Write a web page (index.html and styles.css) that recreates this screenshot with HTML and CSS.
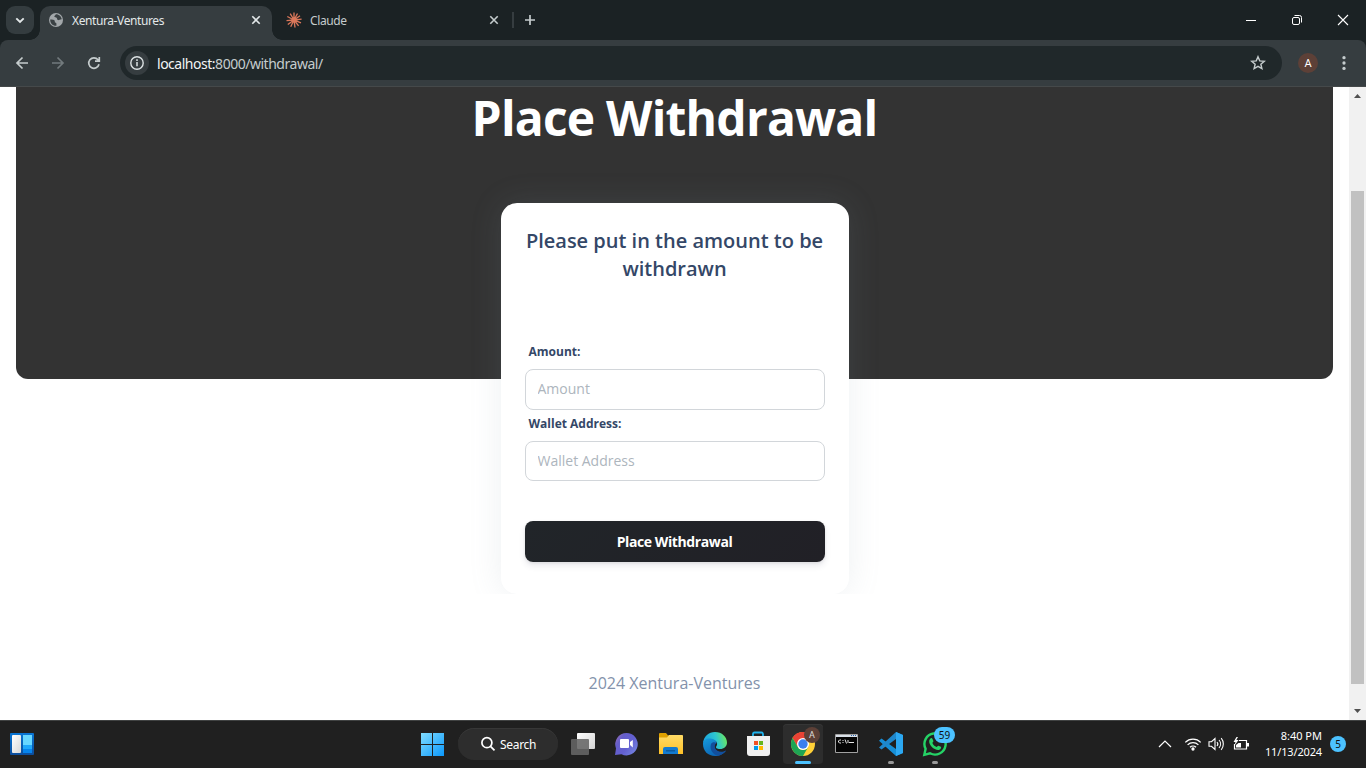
FILE: index.html
```html
<!DOCTYPE html>
<html lang="en">
<head>
<meta charset="utf-8">
<title>Xentura-Ventures</title>
<link rel="stylesheet" href="styles.css">
</head>
<body>
<div class="screen">
  <div class="tabstrip">
    <button class="tab-search" aria-label="Search tabs"><svg width="28" height="28" viewBox="0 0 28 28"><path d="M10.3 12.3 14 16l3.7-3.7" fill="none" stroke="#e3e8e9" stroke-width="1.9"/></svg></button>
    <div class="tab tab-active">
      <svg class="favicon" width="16" height="16" viewBox="0 0 16 16"><circle cx="8" cy="8" r="7" fill="#a2a7aa"/><path d="M2.200 7.500c2 .1 4 .2 4.500 1.200.4 1-.3 1.300.5 1.800.9.4 1.300.6 1.200 1.600v1.700C4.500 14 2.100 11 2.200 7.500zM7.800 2.200c-.2 1.200-1.600 1.200-1.500 2.300.2 1.100 1.900.6 2.500 1.500.6 1 .1 1.800 1.200 2.100 1.200.3 1.500-.8 3.700-.8C13.500 4.500 11 2.100 7.800 2.200z" fill="#3a4144"/></svg>
      <span class="tab-title t-xen">Xentura-Ventures</span>
      <svg class="close" width="10" height="10" viewBox="0 0 10 10"><path d="m1.300 1.300 7.400 7.400m0-7.400L1.300 8.700" stroke="#e3e8e9" stroke-width="1.600"/></svg>
    </div>
    <div class="tab tab-claude">
      <svg class="favicon" width="16" height="16" viewBox="0 0 16 16"><path d="M8 8V.5M8 8l3.500-6.500M8 8l6-4.200M8 8l7.600-.8M8 8l7 2.800M8 8l4.600 5.900M8 8l1 7.500M8 8l-3.300 6.700M8 8l-6.200 4.500M8 8l-7.500.6M8 8 1.300 4.500M8 8 4.200 1.600" stroke="#d9775a" stroke-width="1.350"/><circle cx="8" cy="8" r="2.400" fill="#d9775a"/></svg>
      <span class="tab-title t-cl">Claude</span>
      <svg class="close" width="10" height="10" viewBox="0 0 10 10"><path d="m1.300 1.300 7.400 7.400m0-7.400L1.300 8.700" stroke="#c5cccd" stroke-width="1.600"/></svg>
    </div>
    <i class="tab-sep"></i>
    <svg class="newtab" width="12" height="12" viewBox="0 0 12 12"><path d="M6 1v10M1 6h10" stroke="#c5cccd" stroke-width="1.700"/></svg>
    <div class="window-controls">
      <svg width="46" height="40" viewBox="0 0 46 40"><path d="M18 20.500h10" stroke="#fff"/></svg>
      <svg width="46" height="40" viewBox="0 0 46 40" fill="none" stroke="#fff"><rect x="18.500" y="17.500" width="7" height="7" rx="1.500"/><path d="M20.500 15.500h5a2 2 0 0 1 2 2v5"/></svg>
      <svg width="46" height="40" viewBox="0 0 46 40"><path d="m18 15 10 10m0-10L18 25" stroke="#fff" stroke-width="1.100"/></svg>
    </div>
  </div>

  <div class="toolbar-back">
  <div class="toolbar">
    <svg class="nav" width="36" height="46" viewBox="0 0 36 46" fill="none" stroke="#c5cccd" stroke-width="1.700"><path d="M24 23H13m5.500-5.500L13 23l5.500 5.500"/></svg>
    <svg class="nav" width="36" height="46" viewBox="0 0 36 46" fill="none" stroke="#727a7d" stroke-width="1.700"><path d="M12 23h11m-5.500-5.500L23 23l-5.500 5.500"/></svg>
    <svg class="nav" width="36" height="46" viewBox="0 0 36 46" fill="none" stroke="#c5cccd" stroke-width="1.700"><path d="M23 24.300A5.200 5.200 0 1 1 22 19.800l1 1M23.300 17v4.200H19"/></svg>
    <div class="omnibox">
      <span class="info"><svg width="24" height="24" viewBox="0 0 24 24"><circle cx="12" cy="12" r="6.200" fill="none" stroke="#dce2e3" stroke-width="1.400"/><path d="M12 11v4.300M12 8.300v1.600" stroke="#dce2e3" stroke-width="1.500"/></svg></span>
      <span class="url"><b>localhost:</b>8000/withdrawal/</span>
      <svg class="star" width="16" height="16" viewBox="0 0 16 16"><path d="m8 1.700 1.750 4.150 4.550.4-3.450 3 1.050 4.400L8 11.300l-3.900 2.350 1.050-4.400-3.450-3 4.550-.4z" fill="none" stroke="#c5cccd" stroke-width="1.400"/></svg>
    </div>
    <span class="avatar">A</span>
    <svg class="menu" width="4" height="16" viewBox="0 0 4 16" fill="#c5cccd"><circle cx="2" cy="2.700" r="1.650"/><circle cx="2" cy="8" r="1.650"/><circle cx="2" cy="13.400" r="1.650"/></svg>
  </div>
  </div>

  <div class="viewport">
    <main class="page">
      <header class="banner"><h1>Place Withdrawal</h1></header>
      <section class="card-clip">
        <form class="card">
          <h5>Please put in the amount to be withdrawn</h5>
          <label for="amount">Amount:</label>
          <input class="amount" id="amount" type="text" placeholder="Amount">
          <label for="wallet">Wallet Address:</label>
          <input class="wallet" id="wallet" type="text" placeholder="Wallet Address">
          <button class="submit" type="button">Place Withdrawal</button>
        </form>
      </section>
      <footer><span>2024 Xentura-Ventures</span></footer>
    </main>
    <div class="scrollbar">
      <svg width="17" height="17" viewBox="0 0 17 17"><path d="M5 11h7L8.500 7z" fill="#505050"/></svg>
      <i class="thumb"></i>
      <svg class="down" width="17" height="17" viewBox="0 0 17 17"><path d="M5 6h7l-3.500 4z" fill="#505050"/></svg>
    </div>
  </div>

  <div class="taskbar">
    <svg class="widgets" width="24" height="22" viewBox="0 0 24 22"><defs><linearGradient id="wg" x2="0" y2="1"><stop stop-color="#0875d4"/><stop offset="1" stop-color="#0c4d9c"/></linearGradient><linearGradient id="ww" x2="1" y2="1"><stop stop-color="#fff"/><stop offset="1" stop-color="#d8d8d8"/></linearGradient></defs><rect width="24" height="22" rx="1" fill="url(#wg)"/><rect x="2" y="2" width="9" height="18" rx="1" fill="url(#ww)"/><path d="M13 2h9v10h-9z" fill="#68d7ff"/><path d="M13 12h9v4h-9z" fill="#1fa8fb"/><path d="M13 16h9v4h-9z" fill="#0684ed"/></svg>
    <div class="apps">
      <span class="app"><svg width="24" height="24" viewBox="0 0 24 24"><defs><linearGradient id="win" gradientUnits="userSpaceOnUse" x1="1" y1="1" x2="24" y2="24"><stop stop-color="#80dcff"/><stop offset="1" stop-color="#0b98fb"/></linearGradient></defs><path d="M1 1h11v11H1zM13 1h11v11H13zM1 13h11v11H1zM13 13h11v11H13z" fill="url(#win)"/></svg></span>
      <span class="search"><svg width="16" height="16" viewBox="0 0 16 16" fill="none" stroke="#fff" stroke-width="1.700"><circle cx="6.900" cy="6.700" r="5"/><path d="m10.500 10.300 4 4"/></svg><span>Search</span></span>
      <span class="app"><svg width="26" height="26" viewBox="0 0 26 26"><defs><linearGradient id="tv" x2="1" y2="1"><stop stop-color="#fff"/><stop offset="1" stop-color="#d3d3d3"/></linearGradient></defs><rect x="7" y="2" width="18" height="16" rx="1" fill="url(#tv)"/><rect x="1" y="8" width="18" height="16" rx="1" fill="#656565" fill-opacity=".88"/></svg></span>
      <span class="app"><svg class="nudge" width="24" height="24" viewBox="0 0 24 24"><defs><linearGradient id="chat" x2="1" y2=".7"><stop stop-color="#a773ac"/><stop offset=".3" stop-color="#655eca"/><stop offset=".65" stop-color="#6360d0"/><stop offset="1" stop-color="#7280df"/></linearGradient></defs><path d="M12.500 1a11.200 11.200 0 1 1-5 21.200L1 23l1-6.500A11.300 11.300 0 0 1 12.500 1z" fill="url(#chat)"/><rect x="6" y="7" width="9" height="9" rx="1" fill="#fff"/><path d="m16 10 2.800-2v7.500L16 13z" fill="#fff"/></svg></span>
      <span class="app"><svg width="26" height="24" viewBox="0 0 26 24"><defs><linearGradient id="fo" x2="0" y2="1"><stop stop-color="#ffdb67"/><stop offset="1" stop-color="#ffc127"/></linearGradient></defs><path d="M1 2q0-1 1-1h6l2 2.500h14q1 0 1 1V9H1z" fill="#e0a100"/><path d="M1 5.500h8L11 3h13q1 0 1 1v18H1z" fill="url(#fo)"/><path d="M5 22v-5q0-2 2-2h11q2 0 2 2v5z" fill="#137bd0"/><path d="M8 18h9v1.500H8z" fill="#0c5b9f"/></svg></span>
      <span class="app"><svg width="26" height="26" viewBox="0 0 26 26"><defs><linearGradient id="e1" x1="0" y1=".5" x2="1" y2=".3"><stop stop-color="#1aa2df"/><stop offset=".55" stop-color="#2dc6d1"/><stop offset="1" stop-color="#6ee95a"/></linearGradient><linearGradient id="e2" x2=".6" y2="1"><stop stop-color="#169bdd"/><stop offset="1" stop-color="#0b62b3"/></linearGradient></defs><path d="M1 12C2 5 6.500 1 13 1c7 0 12 5 12 10.500 0 4-3 6.500-7 6.500-3 0-5-1.200-3.500-3 1.500-2 .5-5-3-6C7.500 7.900 3 9 1 12z" fill="url(#e1)"/><path d="M1 13c0-4 3.500-6 7.500-5.500 3.500.3 6 2.300 6 4.500-3 .5-3.500 7 2.500 9 2.500.8 5 .3 7-1.500C22 23 17.500 25 13 25 6 25 1 20 1 13z" fill="url(#e2)"/><path d="M9 13c-2 6 3 12 8 11.400 3-.7 5.500-2.700 7-5-4 2.500-9.500 1.600-11-2.400-.8-2 0-4 1.500-5-2-1.500-4.500-1-5.500 1z" fill="#124f9d"/></svg></span>
      <span class="app"><svg class="nudge" width="24" height="26" viewBox="0 0 24 26"><path d="M7 6V3q0-1.500 1.500-1.500h7Q17 1.500 17 3v3" fill="none" stroke="#1fb3ed" stroke-width="1.800"/><path d="M1 5h23v17q0 3-3 3H4q-3 0-3-3z" fill="#f0f0f0"/><path d="M8 10h4v4H8z" fill="#f25022"/><path d="M13 10h4v4h-4z" fill="#65b51f"/><path d="M8 15h4v4H8z" fill="#0099ea"/><path d="M13 15h4v4h-4z" fill="#ffb900"/></svg></span>
      <span class="app active"><svg width="26" height="26" viewBox="0 0 26 26"><circle cx="13" cy="13" r="12" fill="#ffd037"/><path d="M13 13 2.600 7A12 12 0 0 1 23.400 7z" fill="#e94235"/><path d="M13 7h10.400A12 12 0 0 0 2.600 7l5.200 9z" fill="#e94235"/><path d="M2.600 7A12 12 0 0 0 13 25l5.200-9A6 6 0 0 1 7.800 16z" fill="#1ea554"/><circle cx="13" cy="13" r="6" fill="#fff"/><circle cx="13" cy="13" r="4.700" fill="#397fee"/></svg><b class="profile">A</b><i class="run wide"></i></span>
      <span class="app"><svg class="nudge" width="24" height="20" viewBox="0 0 24 20"><path d="M1.500.500h22v18h-22z" fill="#050505" stroke="#a1a1a1"/><path d="M2 1h21v2H2z" fill="#d9e0e8"/><path d="M17 1.500h1m1 0h1m1 0h1" stroke="#2861a8"/><path d="M7 6H5.500l-1 1v1l1 1H7M9 6v1m0 1v1M11 5.500l1.500 4M14 6v3M15 8.500h5" fill="none" stroke="#e5e5e5"/></svg></span>
      <span class="app"><svg width="26" height="26" viewBox="0 0 26 26"><path d="m18 1 7 3v18l-7 3L1 9.700 3.500 7.500 18 18z" fill="#168ed6"/><path d="M18 1 1 16.500l2.500 2L18 8z" fill="#1f87cb"/><path d="m18 1 7 3v18l-7 3z" fill="#2ca8f2"/></svg><i class="run"></i></span>
      <span class="app"><svg width="26" height="26" viewBox="0 0 26 26"><path d="M3.600 17.800A10.600 10.600 0 1 1 8 22.300L2.300 23.800z" fill="none" stroke="#25d366" stroke-width="2.400"/><path d="M8.500 7.500c.7-.8 1.500-.6 1.900.2l1 2.300c.2.700-.9 1.500-1 1.900.7 1.900 2.300 3.200 4.200 4 .6.100 1.200-1.500 1.900-1.200l2.300 1.100c1 .7-.4 3.200-2.400 3.300-4.200.3-9.700-5.200-9.200-9 .1-1.100.7-2 1.300-2.600z" fill="#25d366"/></svg><b class="unread">59</b><i class="run"></i></span>
    </div>
    <div class="tray">
      <svg class="chev" width="14" height="10" viewBox="0 0 14 10"><path d="m1 8 6-6 6 6" fill="none" stroke="#fff" stroke-width="1.200"/></svg>
      <svg class="wifi" width="18" height="14" viewBox="0 0 18 14" fill="none" stroke="#fff" stroke-width="1.300"><path d="M1.300 5.400a10.800 10.800 0 0 1 15.400 0M3.600 7.900a7.600 7.600 0 0 1 10.800 0M6 10.300a4.300 4.300 0 0 1 6 0"/><circle cx="9" cy="12" r="1" fill="#fff"/></svg>
      <svg class="vol" width="17" height="14" viewBox="0 0 17 14" fill="none" stroke="#fff" stroke-width="1.100"><path d="M1 4.700h2.500L7 1.500v11L3.500 9.300H1zM9 5a3 3 0 0 1 0 4M11 3a6 6 0 0 1 0 8M13.200 1.200a9 9 0 0 1 0 11.600"/></svg>
      <svg class="bat" width="17" height="14" viewBox="0 0 17 14"><path d="M6 3.500h7.500V12h-12V7" fill="none" stroke="#fff" stroke-width="1.200"/><path d="M14 6h2v3.500h-2zM3 10.500V8l2.500-2H8v4.500z" fill="#fff"/><path d="M3.500 0 .5 5h2L1.500 8.500 5.500 3H3.300L5 0z" fill="#fff"/></svg>
      <span class="clock"><span class="time">8:40 PM</span><span class="date">11/13/2024</span></span>
      <b class="count">5</b>
    </div>
  </div>
</div>
</body>
</html>
```
FILE: styles.css
```css
* { box-sizing: border-box; }
body { margin: 0; font-family: "Open Sans", "Noto Sans", sans-serif; }
svg { display: block; flex: none; }
.screen { width: 1366px; height: 768px; display: flex; flex-direction: column; overflow: hidden; background: #fff; }

/* Tab strip */
.tabstrip { height: 40px; flex: none; display: flex; align-items: center; background: #1b2224; padding-left: 6px; font-family: "Noto Sans", sans-serif; }
.tab-search { width: 28px; height: 28px; padding: 0; border: 0; border-radius: 9px; background: #343c3f; flex: none; }
.tab { display: flex; align-items: center; }
.tab-active { position: relative; width: 232px; height: 34px; align-self: flex-end; margin-left: 6px; padding: 0 11px 6px 8px; border-radius: 10px 10px 0 0; background: #363d40; }
.tab-active::before, .tab-active::after { content: ""; position: absolute; bottom: 0; width: 10px; height: 10px; }
.tab-active::before { left: -10px; background: radial-gradient(circle at 0 0, transparent 9.500px, #363d40 10px); }
.tab-active::after { right: -10px; background: radial-gradient(circle at 100% 0, transparent 9.500px, #363d40 10px); }
.tab-title { font-size: 12px; line-height: 16px; margin-left: 8px; padding-top: 2px; white-space: nowrap; color: #e3e8e9; }
.t-xen { letter-spacing: -.4px; }
.t-cl { color: #c5cccd; letter-spacing: -.4px; }
.close { margin-left: auto; }
.tab-claude { width: 213px; margin-left: 14px; }
.tab-sep { width: 2px; height: 16px; margin-left: 13px; background: #363d40; }
.newtab { margin-left: 10px; }
.window-controls { margin-left: auto; display: flex; }

/* Toolbar */
.toolbar-back { height: 47px; flex: none; background: #1b2224; }
.toolbar { height: 47px; display: flex; align-items: center; padding: 0 20px 0 4px; background: #363d40; border-bottom: 1px solid #45494a; border-radius: 8px 8px 0 0; }
.omnibox { width: 1162px; height: 34px; margin-left: 8px; display: flex; align-items: center; padding: 0 16px 0 5px; border-radius: 17px; background: #20282a; }
.info { width: 24px; height: 24px; border-radius: 50%; background: #363d40; }
.url { margin-left: 8px; padding-top: 1px; color: #c5cccd; font: 14px/20px "Noto Sans", sans-serif; letter-spacing: -.48px; }
.url b { font-weight: 400; color: #f2f5f5; }
.star { margin-left: auto; }
.avatar { width: 20px; height: 20px; margin-left: 16px; border-radius: 50%; background: #5d4037; color: #fff; font: 11px/21px Roboto, sans-serif; text-align: center; }
.menu { margin-left: auto; }

/* Page */
.viewport { height: 633px; flex: none; display: flex; }
.page { flex: 1; min-width: 0; padding: 0 16px; color: #344767; }
.banner { height: 292px; padding-top: 1px; background: #333; border-radius: 0 0 12px 12px; text-align: center; }
.banner h1 { margin: 0; font-size: 48px; line-height: 60px; font-weight: 700; color: #fff; letter-spacing: -.8px; }
.card-clip { position: relative; width: 448px; height: 441px; margin: -226px auto 0; padding: 50px 50px 0; overflow: hidden; }
.card { width: 348px; height: 391px; padding: 24px; border-radius: 16px; background: #fff; box-shadow: 0 0 32px 0 rgba(136,152,170,.15); display: flex; flex-direction: column; }
.card h5 { margin: 0 0 60px; font-size: 20px; line-height: 28px; font-weight: 600; text-align: center; }
.card label { font-size: 12px; line-height: 18px; font-weight: 700; margin: 0 0 8px 4px; }
.card input { width: 300px; border: 1px solid #d2d6da; border-radius: 8px; padding: 0 12px 2px; background: #fff; font: 14px/20px "Open Sans", sans-serif; outline: 0; }
.card input::placeholder { color: #adb5bd; opacity: 1; }
.card .amount { height: 41px; margin-bottom: 5px; }
.card .wallet { height: 40px; margin-bottom: 40px; }
.submit { height: 41px; padding: 0; border: 0; border-radius: 8px; color: #fff; background: linear-gradient(310deg, #212026, #212529); font: 700 14px/21px "Open Sans", sans-serif; letter-spacing: -.4px; box-shadow: 0 4px 6px rgba(50,50,93,.1), 0 1px 3px rgba(0,0,0,.08); }
footer { margin-top: 77px; text-align: center; font-size: 16px; line-height: 24px; color: #8392ab; }

.scrollbar { width: 17px; display: flex; flex-direction: column; align-items: center; background: #f1f1f1; }
.thumb { width: 13px; height: 493px; margin-top: 87px; background: #c1c1c1; }
.scrollbar .down { margin-top: auto; }

/* Taskbar */
.taskbar { height: 48px; flex: none; display: flex; align-items: center; padding-bottom: 1px; background: #202020; border-top: 1px solid #404242; color: #fff; font-family: "Noto Sans", sans-serif; }
.widgets { margin-left: 10px; }
.apps { display: flex; align-items: center; margin-left: 376px; }
.app { position: relative; width: 44px; height: 46px; display: flex; align-items: center; justify-content: center; }
.nudge { margin-right: 2px; }
.search { width: 100px; height: 32px; margin: 0 3px 0 4px; padding-left: 22px; display: flex; align-items: center; gap: 4px; border-radius: 16px; background: #2d2d2d; box-shadow: inset 0 1px #373737; font-size: 12px; letter-spacing: -.3px; }
.search span { padding-top: 1px; }
.active::before { content: ""; position: absolute; inset: 3px 2px; border-radius: 4px; background: #2d2d2d; box-shadow: inset 0 1px #363636; }
.active svg { position: relative; }
.run { position: absolute; bottom: 3px; left: 19px; width: 6px; height: 3px; border-radius: 2px; background: #999; }
.run.wide { left: 14px; width: 16px; background: #4cc2ff; }
.profile { position: absolute; left: 23px; top: 6px; width: 16px; height: 16px; border-radius: 50%; background: #5d4037; color: #ddd; font: 9px/16px Roboto, sans-serif; text-align: center; }
.unread { position: absolute; left: 21px; top: 6px; width: 21px; height: 16px; border-radius: 8px; background: #4cc2ff; color: #111; font-size: 10px; font-weight: 400; line-height: 16px; text-align: center; }
.tray { margin-left: auto; padding-right: 20px; display: flex; align-items: center; }
.wifi { margin-left: 12px; }
.vol { margin-left: 6px; }
.bat { margin-left: 8px; }
.clock { width: 66px; margin-left: 6px; display: flex; flex-direction: column; align-items: flex-end; font-size: 11px; line-height: 16px; white-space: nowrap; }
.date { letter-spacing: -.15px; }
.count { width: 16px; height: 16px; margin-left: 8px; border-radius: 50%; background: #4cc2ff; color: #111; font-size: 10px; line-height: 16px; font-weight: 400; text-align: center; }
```
